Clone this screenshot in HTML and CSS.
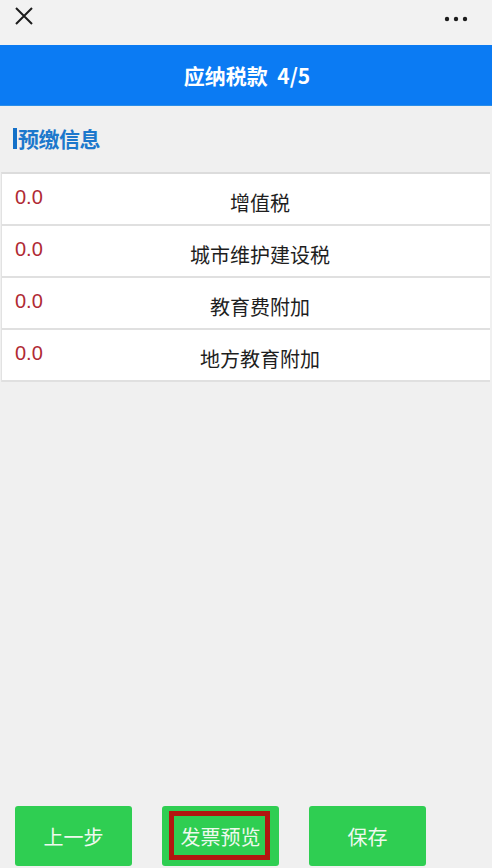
FILE: index.html
```html
<!DOCTYPE html>
<html lang="zh-CN">
<head>
<meta charset="utf-8">
<title>应纳税款</title>
<link rel="stylesheet" href="styles.css">
</head>
<body>
<div class="page">
  <header class="topbar">
    <svg class="close" width="20" height="20" viewBox="0 0 20 20"><path d="M2 2 L18 18 M18 2 L2 18" stroke="#1c1c1c" stroke-width="2" fill="none"/></svg>
    <svg class="more" width="24" height="6" viewBox="0 0 24 6"><circle cx="3" cy="3" r="2.2" fill="#1c1c1c"/><circle cx="12" cy="3" r="2.2" fill="#1c1c1c"/><circle cx="21" cy="3" r="2.2" fill="#1c1c1c"/></svg>
  </header>
  <div class="titlebar">应纳税款&nbsp; 4/5</div>
  <div class="section-head"><span class="bar"></span>预缴信息</div>
  <div class="table">
    <div class="row"><span class="num">0.0</span><span class="label">增值税</span></div>
    <div class="row"><span class="num">0.0</span><span class="label">城市维护建设税</span></div>
    <div class="row"><span class="num">0.0</span><span class="label">教育费附加</span></div>
    <div class="row"><span class="num">0.0</span><span class="label">地方教育附加</span></div>
  </div>
  <div class="spacer"></div>
  <footer class="actions">
    <button class="btn">上一步</button>
    <button class="btn marked">发票预览<span class="mark"></span></button>
    <button class="btn">保存</button>
  </footer>
</div>
</body>
</html>
```
FILE: styles.css
```css
* { box-sizing: border-box; }
html, body { margin: 0; padding: 0; }
body {
  background: #f0f0f0;
  font-family: "Noto Sans CJK SC", "Noto Sans", sans-serif;
  color: #222;
}
.page {
  width: 492px;
  height: 868px;
  display: flex;
  flex-direction: column;
}
.topbar {
  height: 45px;
  background: #f2f2f2;
  display: flex;
  justify-content: space-between;
  align-items: flex-start;
  padding: 6px 24px 0 14px;
}
.topbar .more { margin-top: 10px; }
.titlebar {
  height: 61px;
  background: #0b7bf3;
  color: #fff;
  font-weight: bold;
  font-size: 21px;
  display: flex;
  align-items: center;
  justify-content: center;
  padding-left: 2px;
  border-bottom: 1px solid #2b8ee8;
}
.section-head {
  height: 66px;
  display: flex;
  align-items: center;
  padding-left: 13px;
  padding-bottom: 2px;
  font-size: 21px;
  font-weight: bold;
  color: #1c78cc;
  letter-spacing: -0.5px;
}
.section-head .bar {
  width: 4px;
  height: 21px;
  background: #1470c8;
  margin-right: 1px;
}
.table {
  margin: 0 2px 0 1px;
  background: #fff;
  border-top: 2px solid #dcdcdc;
  border-left: 1px solid #e2e2e2;
}
.row {
  height: 52px;
  display: flex;
  border-bottom: 2px solid #e0e0e0;
}
.num {
  width: 29px;
  padding: 12px 0 0 13px;
  box-sizing: content-box;
  font-family: "Liberation Sans", Arial, sans-serif;
  font-size: 20px;
  color: #b02a34;
}
.label {
  flex: 1;
  text-align: center;
  font-size: 20px;
  padding-top: 14px;
  padding-right: 14px;
  color: #1e1e1e;
}
.spacer { flex: 1; }
.actions {
  display: flex;
  gap: 30px;
  padding: 0 0 2px 15px;
}
.btn {
  position: relative;
  width: 117px;
  height: 60px;
  border: none;
  border-radius: 3px;
  background: #2fce52;
  color: #eef9ee;
  font-family: "Noto Sans CJK SC", sans-serif;
  font-size: 20px;
  padding: 0;
}
.mark {
  position: absolute;
  left: 7px;
  right: 9px;
  top: 5px;
  bottom: 6px;
  border: 5px solid #b2170f;
}
```
